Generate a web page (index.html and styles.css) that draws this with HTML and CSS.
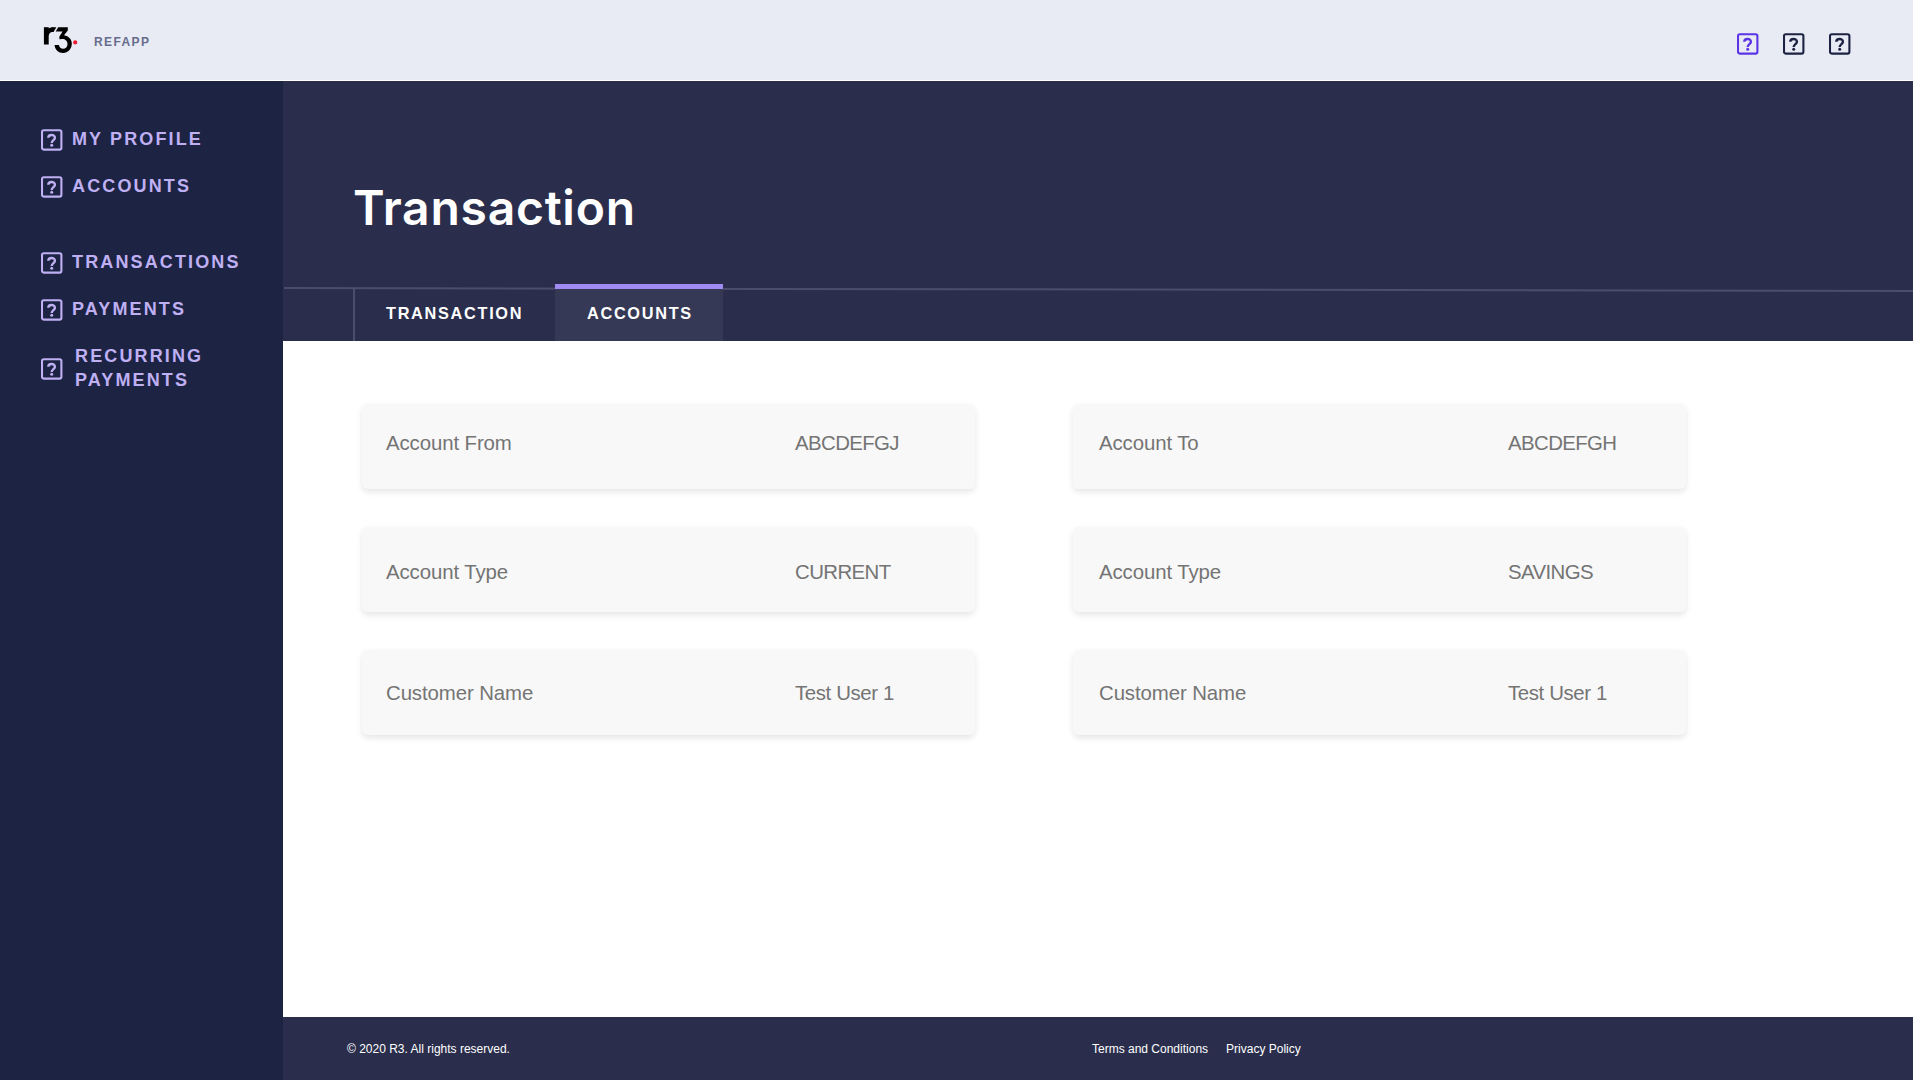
FILE: index.html
```html
<!DOCTYPE html>
<html lang="en">
<head>
<meta charset="utf-8">
<title>R3 Refapp - Transaction</title>
<link rel="stylesheet" href="styles.css">
</head>
<body>
<svg width="0" height="0" class="defs" aria-hidden="true">
  <symbol id="help" viewBox="0 0 22 22">
    <rect x="1" y="1.2" width="19.4" height="19.4" rx="1.8" fill="none" stroke="currentColor" stroke-width="2.1"/>
    <path d="M7.3 8.7C7.3 5.1 13.9 5 13.9 8.7C13.9 11 10.7 11.2 10.7 14" fill="none" stroke="currentColor" stroke-width="2.4"/>
    <circle cx="10.7" cy="16.3" r="1.5" fill="currentColor"/>
  </symbol>
</svg>
<div class="app">
  <header class="header">
    <a class="brand">
      <svg class="logo" viewBox="0 0 36 30" fill="none" stroke="#000">
        <path d="M3.3 2.2V19.5" stroke-width="4.8"/>
        <path d="M3.6 10.5C3.8 6.6 6 4.6 10.8 4.5" stroke-width="4.4"/>
        <path d="M8.5 2.3H13.4L10.6 6.7H8.5Z" fill="#000" stroke="none"/>
        <path d="M15.2 2.3H24.8V5.6L21 10.2C25.9 11 28.8 14.4 28.8 18.6C28.8 24 25.1 28 20.2 28C15.4 28 11.9 24.7 11.6 20H15.9C16.3 22.4 17.8 23.8 20.2 23.8C22.7 23.8 24.5 21.9 24.5 19C24.5 16 22.3 14 19.2 14L16.4 14.2V11.6L19.6 6.6H12.7Z" fill="#000" stroke="none"/>
        <circle cx="32.2" cy="17.4" r="2.1" fill="#ec1d33" stroke="none"/>
      </svg>
      <span class="brand-name">REFAPP</span>
    </a>
    <div class="actions">
      <svg class="icon icon-active"><use href="#help"/></svg>
      <svg class="icon"><use href="#help"/></svg>
      <svg class="icon"><use href="#help"/></svg>
    </div>
  </header>
  <div class="body">
    <nav class="sidebar">
      <div class="nav-group">
        <a class="nav-item"><svg class="icon"><use href="#help"/></svg><span>MY PROFILE</span></a>
        <a class="nav-item"><svg class="icon"><use href="#help"/></svg><span>ACCOUNTS</span></a>
      </div>
      <div class="nav-group">
        <a class="nav-item"><svg class="icon"><use href="#help"/></svg><span>TRANSACTIONS</span></a>
        <a class="nav-item"><svg class="icon"><use href="#help"/></svg><span>PAYMENTS</span></a>
        <a class="nav-item nav-item-wide"><svg class="icon"><use href="#help"/></svg><span>RECURRING<br>PAYMENTS</span></a>
      </div>
    </nav>
    <div class="main">
      <section class="hero">
        <h1 class="title">Transaction</h1>
        <div class="tabs">
          <svg class="rule" viewBox="0 0 1629 6" preserveAspectRatio="none"><path d="M0 2L1629 5" stroke="#4b4e6b" stroke-width="2"/></svg>
          <a class="tab">TRANSACTION</a>
          <a class="tab tab-active">ACCOUNTS</a>
        </div>
      </section>
      <main class="content">
        <div class="column">
          <div class="card card-first"><span class="label">Account From</span><span class="value">ABCDEFGJ</span></div>
          <div class="card card-second"><span class="label">Account Type</span><span class="value">CURRENT</span></div>
          <div class="card"><span class="label">Customer Name</span><span class="value value-name">Test User 1</span></div>
        </div>
        <div class="column column-to">
          <div class="card card-first"><span class="label">Account To</span><span class="value">ABCDEFGH</span></div>
          <div class="card card-second"><span class="label">Account Type</span><span class="value">SAVINGS</span></div>
          <div class="card"><span class="label">Customer Name</span><span class="value value-name">Test User 1</span></div>
        </div>
      </main>
      <footer class="footer">
        <span class="copyright">© 2020 R3. All rights reserved.</span>
        <a>Terms and Conditions</a>
        <a>Privacy Policy</a>
      </footer>
    </div>
  </div>
</div>
</body>
</html>
```
FILE: styles.css
```css
* { box-sizing: border-box; }
body {
  margin: 0;
  background: #fff;
  font-family: "Liberation Sans", Arial, sans-serif;
}
.defs { position: absolute; }
.app {
  width: 1913px;
  height: 1080px;
  display: flex;
  flex-direction: column;
}
.icon { width: 22px; height: 22px; flex: none; display: block; }

.header {
  height: 81px;
  border-bottom: 1px solid #fff;
  background: #e8ebf4;
  display: flex;
  justify-content: space-between;
  padding: 0 62px 0 43px;
}
.brand { display: flex; padding-top: 25px; }
.logo { width: 36px; height: 30px; }
.brand-name {
  margin: 10px 0 0 15px;
  font-size: 12px;
  line-height: 14px;
  font-weight: bold;
  letter-spacing: 1.4px;
  color: #676c8c;
}
.actions { display: flex; gap: 24px; padding-top: 33px; color: #1c2342; }
.icon-active { color: #5b34e6; }

.body { flex: 1; display: flex; }
.sidebar {
  width: 283px;
  background: #1d2343;
  padding: 46px 0 0 41px;
  display: flex;
  flex-direction: column;
  gap: 52px;
}
.nav-group { display: flex; flex-direction: column; gap: 23px; }
.nav-item {
  display: flex;
  align-items: center;
  gap: 9px;
  color: #bfb0f3;
  font-size: 18px;
  line-height: 24px;
  font-weight: bold;
  letter-spacing: 2.13px;
}
.nav-item .icon { margin-top: 2px; }
.nav-item-wide { gap: 12px; }

.main { flex: 1; display: flex; flex-direction: column; }
.hero {
  height: 260px;
  background: #2a2e4c;
  display: flex;
  flex-direction: column;
  justify-content: space-between;
}
.title {
  margin: 97px 0 0 70px;
  color: #fff;
  font: 600 48px/60px Inter, sans-serif;
  letter-spacing: 0.75px;
}
.tabs {
  position: relative;
  height: 57px;
  display: flex;
  padding-left: 70px;
}
.rule {
  position: absolute;
  left: 1px;
  top: 2px;
  width: 1629px;
  height: 6px;
}
.tab {
  position: relative;
  width: 202px;
  height: 52px;
  margin-top: 5px;
  padding: 14px 0 0 31px;
  border-left: 2px solid #4b4e6b;
  color: #fff;
  font-size: 16.3px;
  line-height: 20px;
  font-weight: bold;
  letter-spacing: 1.7px;
}
.tab-active {
  width: 168px;
  height: 57px;
  margin-top: 0;
  padding-left: 32px;
  border-left: 0;
  border-top: 5px solid #9f8bf1;
  background: #363955;
}

.content {
  flex: 1;
  display: flex;
  gap: 98px;
  padding: 63px 0 0 79px;
}
.column { display: flex; flex-direction: column; gap: 38px; }
.card {
  width: 613px;
  height: 85px;
  padding: 31px 0 0 24px;
  display: flex;
  border-radius: 6px;
  background: #f8f8f8;
  box-shadow: 0 3px 6px rgba(0, 0, 0, 0.1);
  color: #747474;
  font-size: 20.4px;
  line-height: 24px;
}
.column-to .card { padding-left: 26px; }
.card-first { padding-top: 27px; }
.card-second { padding-top: 33px; }
.label { width: 409px; letter-spacing: -0.1px; }
.value { letter-spacing: -0.6px; }
.value-name { letter-spacing: -0.38px; }

.footer {
  height: 63px;
  background: #2a2e4c;
  display: flex;
  align-items: center;
  gap: 18px;
  padding-left: 64px;
  color: #fff;
  font-size: 12px;
}
.copyright { width: 727px; }
```
